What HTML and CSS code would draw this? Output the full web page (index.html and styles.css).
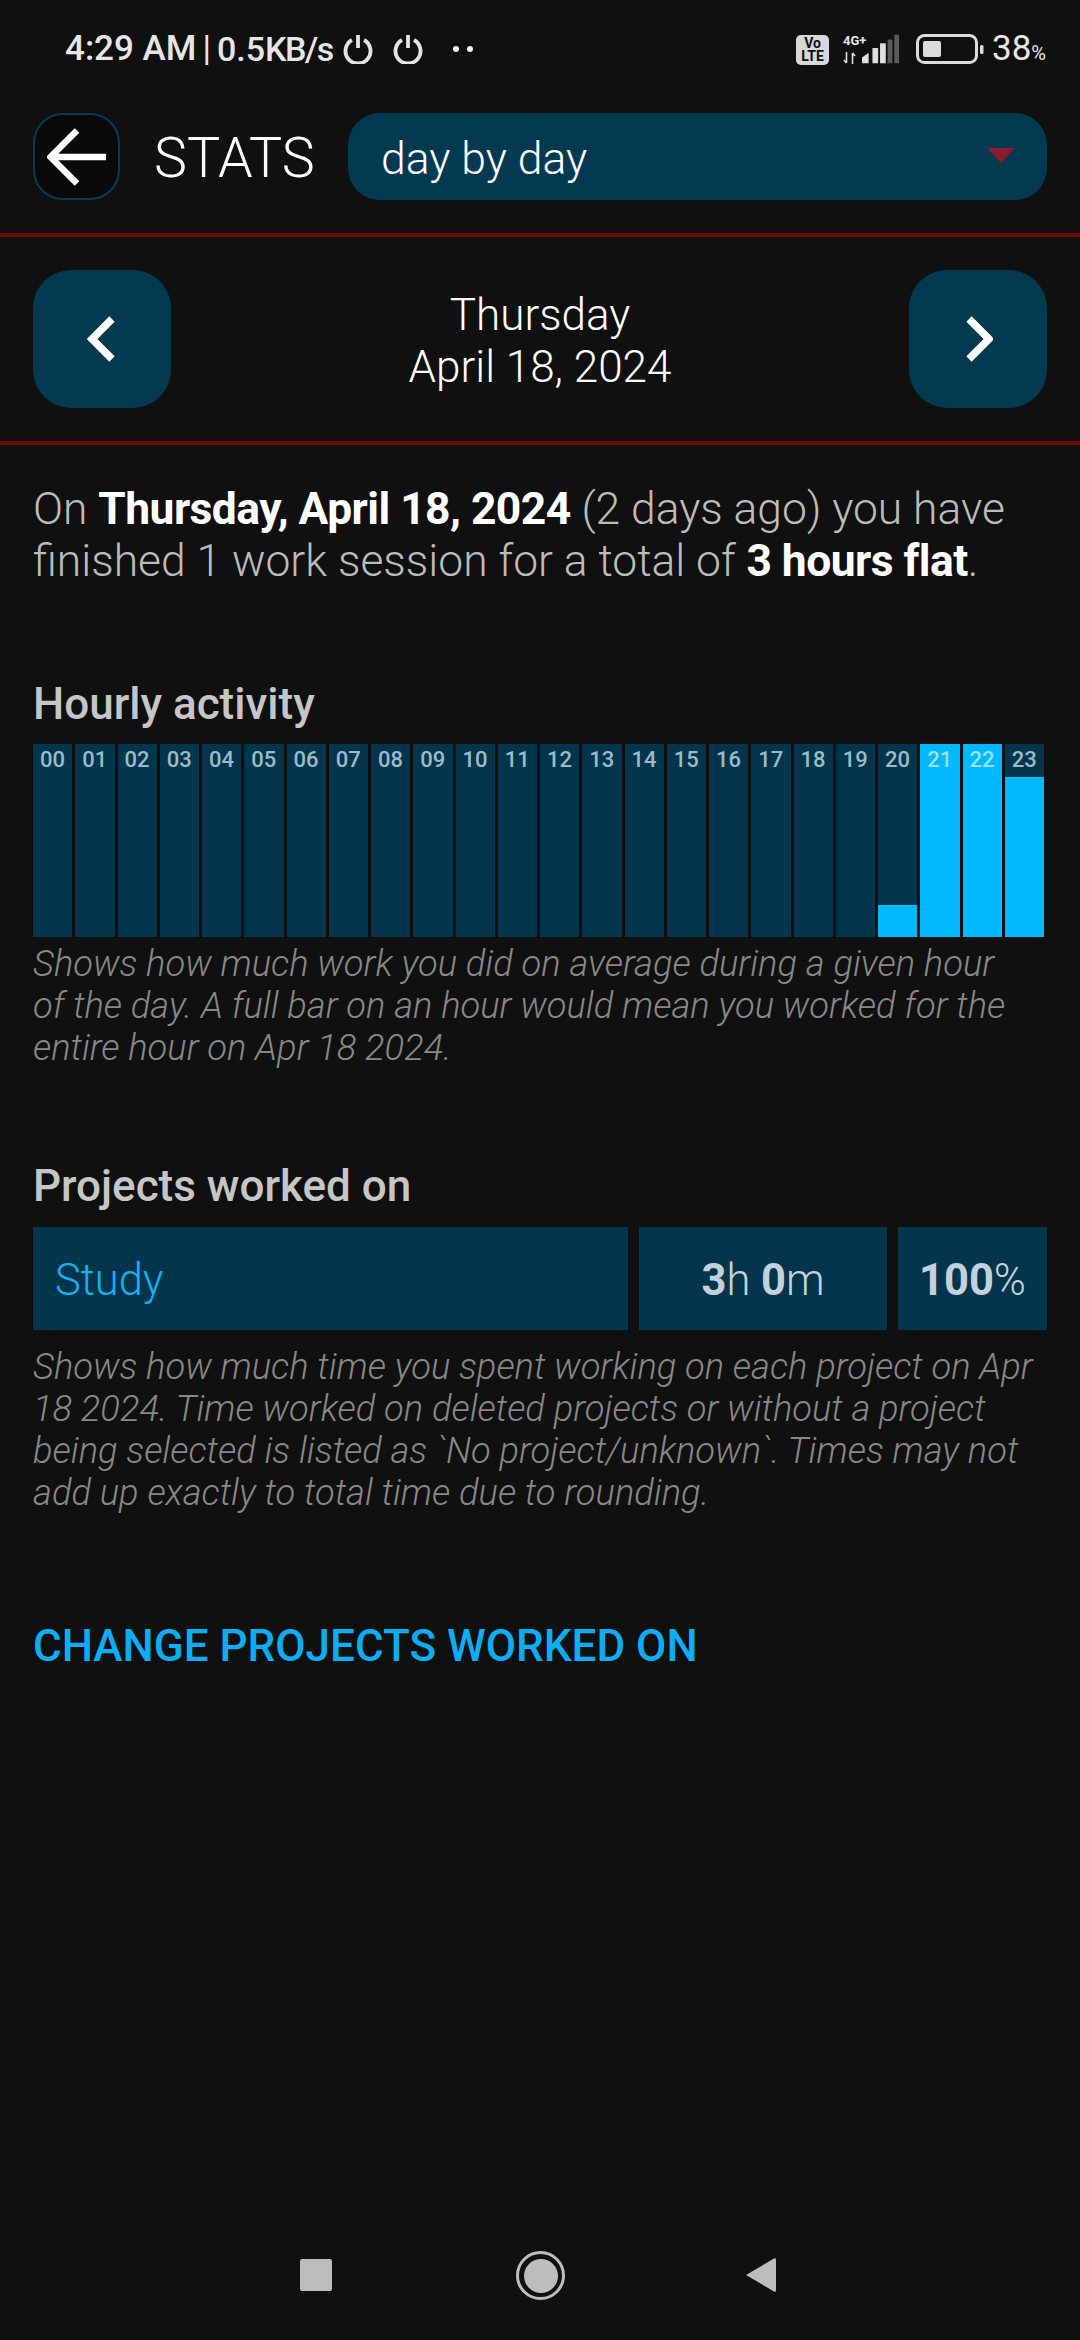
FILE: index.html
```html
<!DOCTYPE html>
<html lang="en">
<head>
<meta charset="utf-8">
<title>Stats</title>
<link rel="stylesheet" href="styles.css">
</head>
<body>
<div class="page">
  <div class="status">
    <span class="time">4:29 AM</span><span class="sep">|</span><span class="speed">0.5<span class="unit">KB/s</span></span>
    <svg class="pw pw1" viewBox="0 0 30 30"><path d="M9 6a12.500 12.500 0 1 0 12 0M15 1v13" fill="none" stroke="#e4e4e4" stroke-width="3.800"/></svg>
    <svg class="pw pw2" viewBox="0 0 30 30"><path d="M9 6a12.500 12.500 0 1 0 12 0M15 1v13" fill="none" stroke="#e4e4e4" stroke-width="3.800"/></svg>
    <span class="dots"><i></i><i></i></span>
    <span class="spacer"></span>
    <span class="volte"><span>Vo</span><span>LTE</span></span>
    <span class="net">
      <span class="net-text"><span class="g">4G+</span><svg class="arrows" viewBox="0 0 12 12"><path d="M3 0v11M0.5 8L3 11M9 12V1M9 1l2.500 3" fill="none" stroke="#dedede" stroke-width="1.600"/></svg></span>
      <svg class="bars" viewBox="0 0 40 30"><path d="M0 30V24L7 19V30Z" fill="#e0e0e0"/><rect x="11" y="14" width="6" height="16" fill="#e0e0e0"/><rect x="19" y="9" width="6" height="21" fill="#e0e0e0"/><rect x="27" y="5" width="5" height="25" fill="#5a5a5a"/><rect x="34" y="0" width="5" height="30" fill="#5a5a5a"/></svg>
    </span>
    <svg class="batt" viewBox="0 0 68 30"><rect x="1.500" y="1.500" width="59" height="27" rx="7" fill="none" stroke="#dcdcdc" stroke-width="3"/><rect x="7" y="7" width="18" height="16" rx="2" fill="#dcdcdc"/><rect x="64" y="11" width="3.500" height="9" rx="1.500" fill="#dcdcdc"/></svg>
    <span class="pct">38<small>%</small></span>
  </div>

  <header class="topbar">
    <div class="back">
      <svg viewBox="0 0 60 58" class="back-ico"><path d="M59 29H6M30 2.500L3.500 29 30 55.500" fill="none" stroke="#fff" stroke-width="6.500"/></svg>
    </div>
    <div class="title">STATS</div>
    <div class="select"><span>day by day</span><i class="caret"></i></div>
  </header>

  <div class="datebar">
    <div class="navbtn"><svg viewBox="0 0 30 46" class="chev"><path d="M25 3L5 23l20 20" fill="none" stroke="#fff" stroke-width="7.500"/></svg></div>
    <div class="date">Thursday<br>April 18, 2024</div>
    <div class="navbtn"><svg viewBox="0 0 30 46" class="chev"><path d="M6 3l20 20L6 43" fill="none" stroke="#fff" stroke-width="7.500"/></svg></div>
  </div>

  <main class="content">
    <p class="summary">On <b>Thursday, April 18, 2024</b> (2 days ago) you have finished 1 work session for a total of <b>3 hours flat</b>.</p>

    <h2 class="h h1st">Hourly activity</h2>
    <div class="hours">
      <div class="hr"><span>00</span></div><div class="hr"><span>01</span></div><div class="hr"><span>02</span></div><div class="hr"><span>03</span></div><div class="hr"><span>04</span></div><div class="hr"><span>05</span></div><div class="hr"><span>06</span></div><div class="hr"><span>07</span></div><div class="hr"><span>08</span></div><div class="hr"><span>09</span></div><div class="hr"><span>10</span></div><div class="hr"><span>11</span></div><div class="hr"><span>12</span></div><div class="hr"><span>13</span></div><div class="hr"><span>14</span></div><div class="hr"><span>15</span></div><div class="hr"><span>16</span></div><div class="hr"><span>17</span></div><div class="hr"><span>18</span></div><div class="hr"><span>19</span></div>
      <div class="hr"><i class="fill" style="height:32px"></i><span>20</span></div>
      <div class="hr"><i class="fill" style="height:193px"></i><span>21</span></div>
      <div class="hr"><i class="fill" style="height:193px"></i><span>22</span></div>
      <div class="hr"><i class="fill" style="height:160px"></i><span>23</span></div>
    </div>
    <p class="note">Shows how much work you did on average during a given hour<br>of the day. A full bar on an hour would mean you worked for the<br>entire hour on Apr 18 2024.</p>

    <h2 class="h h2nd">Projects worked on</h2>
    <div class="proj">
      <div class="cell pname">Study</div>
      <div class="cell ptime"><b>3</b>h <b>0</b>m</div>
      <div class="cell ppct"><b>100</b>%</div>
    </div>
    <p class="note note-proj">Shows how much time you spent working on each project on Apr<br>18 2024. Time worked on deleted projects or without a project<br>being selected is listed as `No project/unknown`. Times may not<br>add up exactly to total time due to rounding.</p>

    <div class="action">CHANGE PROJECTS WORKED ON</div>
  </main>

  <nav class="sysnav">
    <i class="sq"></i>
    <span class="home"><i></i></span>
    <svg class="tri" viewBox="0 0 32 36"><path d="M1 18L29 1.500q2-1 2 1.500v30q0 2.500-2 1.500Z" fill="#bdbdbd"/></svg>
  </nav>
</div>
</body>
</html>
```
FILE: styles.css
```css
* { box-sizing: border-box; }
html, body { margin: 0; padding: 0; }
body { background: #101010; font-family: Roboto, "Liberation Sans", sans-serif; color: #fff; }
.page { width: 1080px; height: 2340px; display: flex; flex-direction: column; overflow: hidden; }

.status { height: 113px; padding: 34px 34px 0 65px; display: flex; align-items: flex-start; color: #e6e6e6; }
.time, .speed, .sep { font-size: 35px; font-weight: 500; line-height: 30px; }
.sep { margin: 0 6px; font-weight: 400; }
.speed { font-size: 34px; }
.unit { letter-spacing: -1.500px; }
.pw { width: 30px; height: 30px; }
.pw1 { margin-left: 10px; }
.pw2 { margin-left: 20px; }
.dots { display: flex; gap: 8px; margin: 12px 0 0 30px; }
.dots i { width: 6px; height: 6px; border-radius: 50%; background: #f0f0f0; }
.spacer { flex: 1; }
.volte { width: 33px; height: 30px; margin-top: 1px; border-radius: 5px; background: #d8d8d8; color: #101010; display: flex; flex-direction: column; align-items: center; justify-content: center; font-size: 14px; font-weight: 700; line-height: 13px; }
.net { display: flex; align-items: flex-end; margin-left: 14px; height: 30px; }
.net-text { display: flex; flex-direction: column; width: 19px; height: 30px; }
.g { font-size: 13px; font-weight: 700; line-height: 14px; color: #e6e6e6; white-space: nowrap; }
.arrows { width: 13px; height: 12px; margin-top: 4px; }
.bars { width: 38px; height: 30px; }
.batt { width: 68px; height: 30px; margin-left: 16px; }
.pct { font-size: 35px; line-height: 30px; margin-left: 8px; }
.pct small { font-size: 20px; }

.topbar { display: flex; align-items: center; height: 87px; padding: 0 33px; }
.back { width: 87px; height: 87px; border: 2.500px solid #0c3a50; border-radius: 30px; background: #0a0a0a; display: flex; align-items: center; justify-content: center; }
.back-ico { width: 60px; height: 58px; }
.title { font-size: 55.500px; font-weight: 300; margin: 4px 0 0 34px; width: 194px; }
.select { flex: 1; height: 87px; border-radius: 32px; background: #033a52; display: flex; align-items: center; justify-content: space-between; padding: 5px 32px 0 33px; font-size: 44.500px; font-weight: 300; }
.caret { width: 0; height: 0; border-left: 14px solid transparent; border-right: 14px solid transparent; border-top: 15px solid #8a1c2e; margin-bottom: 8px; }

.datebar { margin-top: 33px; border-top: 4px solid #6b0a0c; border-bottom: 4px solid #6b0a0c; padding: 32px 33px; display: flex; justify-content: space-between; align-items: center; height: 212px; }
.navbtn { width: 138px; height: 138px; border-radius: 38px; background: #033a52; display: flex; align-items: center; justify-content: center; }
.chev { width: 30px; height: 46px; }
.date { text-align: center; font-size: 44px; font-weight: 300; line-height: 52px; margin-top: 3px; }

.content { padding: 0 33px; }
.summary { margin: 38px 0 0; font-size: 44.400px; font-weight: 300; line-height: 52px; color: #bcbcbc; }
.summary b { font-weight: 700; color: #fff; letter-spacing: -0.550px; }
.h { margin: 0; font-size: 44px; font-weight: 500; line-height: 48px; color: #c6c6c6; }
.h1st { margin-top: 93px; }
.h2nd { margin-top: 93px; }
.hours { display: grid; grid-template-columns: repeat(24, 1fr); gap: 3px; margin-top: 16px; width: 1011px; height: 193px; }
.hr { position: relative; background: #03354c; text-align: center; font-size: 22px; font-weight: 500; line-height: 32px; color: rgba(215,240,250,.72); }
.hr span { position: relative; display: block; }
.fill { position: absolute; left: 0; right: 0; bottom: 0; background: #00b8ff; }
.note { margin: 6px 0 0; font-size: 36.300px; font-weight: 300; font-style: italic; line-height: 42px; color: #888; white-space: nowrap; }
.note-proj { margin-top: 16px; }
.proj { display: flex; gap: 11px; margin-top: 17px; height: 103px; }
.cell { background: #03354c; display: flex; align-items: center; padding-top: 3px; font-size: 43.500px; font-weight: 300; white-space: pre; color: #c3d2da; }
.cell b { font-weight: 700; }
.pname { width: 595px; padding-left: 22px; color: #19aeef; }
.ptime { width: 248px; justify-content: center; }
.ppct { width: 149px; justify-content: center; }
.action { margin-top: 107px; font-size: 44px; font-weight: 500; line-height: 50px; color: #0cadf3; }

.sysnav { margin-top: auto; height: 89px; padding-left: 300px; display: flex; align-items: flex-start; }
.sq { width: 32px; height: 32px; margin-top: 8px; border-radius: 2px; background: #bdbdbd; }
.home { width: 49px; height: 49px; margin-left: 184px; border: 3px solid #bdbdbd; border-radius: 50%; display: flex; align-items: center; justify-content: center; }
.home i { width: 34px; height: 34px; border-radius: 50%; background: #bdbdbd; }
.tri { width: 32px; height: 36px; margin: 6px 0 0 180px; }
```
